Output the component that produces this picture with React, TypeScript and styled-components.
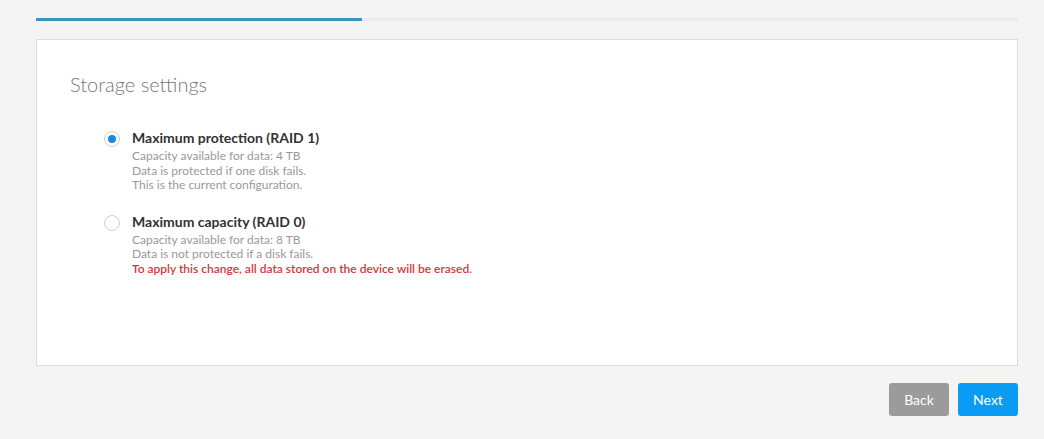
import React from 'react';
import { styled, createGlobalStyle } from 'styled-components'

const GlobalStyle = createGlobalStyle`
  html, body {
    margin: 0;
    padding: 0;
    background-color: #f4f4f4;
    font-family: Lato, "Open Sans", Arial, sans-serif;
  }
`

// 選項資料
const options = [
  {
    id: 'raid1',
    title: 'Maximum protection (RAID 1)',
    lines: [
      'Capacity available for data: 4 TB',
      'Data is protected if one disk fails.',
      'This is the current configuration.'
    ],
    warning: ''
  },
  {
    id: 'raid0',
    title: 'Maximum capacity (RAID 0)',
    lines: [
      'Capacity available for data: 8 TB',
      'Data is not protected if a disk fails.'
    ],
    warning: 'To apply this change, all data stored on the device will be erased.'
  }
]

function App() {
  const [selected, setSelected] = React.useState('raid1')

  return (
    <StyledPage>
      <GlobalStyle />
      <StyledProgress>
        <StyledProgressFill style={{ width: '33.2%' }} />
      </StyledProgress>

      <StyledCard>
        <StyledTitle>Storage settings</StyledTitle>
        <StyledOptionList>
          {options.map((item) => (
            <StyledOption key={item.id} onClick={() => setSelected(item.id)}>
              <StyledRadio $checked={selected === item.id} />
              <div>
                <StyledOptionTitle>{item.title}</StyledOptionTitle>
                {item.lines.map((line) => (
                  <StyledDesc key={line}>{line}</StyledDesc>
                ))}
                {item.warning && <StyledWarning>{item.warning}</StyledWarning>}
              </div>
            </StyledOption>
          ))}
        </StyledOptionList>
      </StyledCard>

      <StyledFooter>
        <StyledBtn $variant="back">Back</StyledBtn>
        <StyledBtn $variant="next">Next</StyledBtn>
      </StyledFooter>
    </StyledPage>
  );
}

export default App;

// styled
const StyledPage = styled.div`
  width: 982px;
  padding: 18px 0 0 36px;
`

const StyledProgress = styled.div`
  height: 3px;
  background-color: #ececec;
  margin-bottom: 18px;
`

const StyledProgressFill = styled.div`
  height: 3px;
  background-color: #3a97bb;
`

const StyledCard = styled.div`
  background-color: #fff;
  border: 1px solid #dcdcdc;
  padding: 32px 32px 0;
  box-sizing: border-box;
  height: 327px;
`

const StyledTitle = styled.h2`
  margin: 0 0 32px;
  font-size: 20px;
  line-height: 24px;
  font-weight: 300;
  color: #777;
  padding-left: 1px;
`

const StyledOptionList = styled.div`
  padding-left: 35px;
  display: flex;
  flex-direction: column;
  gap: 19px;
`

const StyledOption = styled.div`
  display: flex;
  align-items: flex-start;
  cursor: pointer;
`

const StyledRadio = styled.span<{ $checked: boolean }>`
  flex: none;
  width: 16px;
  height: 16px;
  margin-top: 3px;
  margin-right: 12px;
  border-radius: 50%;
  border: 1px solid #cfcfcf;
  box-sizing: border-box;
  background-color: #fff;
  display: flex;
  align-items: center;
  justify-content: center;
  &::after {
    content: '';
    width: 8px;
    height: 8px;
    border-radius: 50%;
    background-color: #1a88e0;
    display: ${(p) => (p.$checked ? 'block' : 'none')};
  }
`

const StyledOptionTitle = styled.p`
  margin: 0 0 1px;
  font-size: 14px;
  line-height: 20px;
  font-weight: 700;
  color: #333;
`

const StyledDesc = styled.p`
  margin: 0;
  font-size: 12px;
  line-height: 14.5px;
  color: #999;
`

const StyledWarning = styled(StyledDesc)`
  color: #d0393c;
  font-weight: 600;
`

const StyledFooter = styled.div`
  display: flex;
  justify-content: flex-end;
  gap: 9px;
  margin-top: 17px;
`

const StyledBtn = styled.button<{ $variant: 'back' | 'next' }>`
  width: 60px;
  height: 33px;
  border: 0;
  border-radius: 3px;
  font-family: Lato, Arial, sans-serif;
  font-size: 14px;
  color: #fff;
  background-color: ${(p) => (p.$variant === 'next' ? '#0a9bf5' : '#9b9b9b')};
  cursor: pointer;
`
